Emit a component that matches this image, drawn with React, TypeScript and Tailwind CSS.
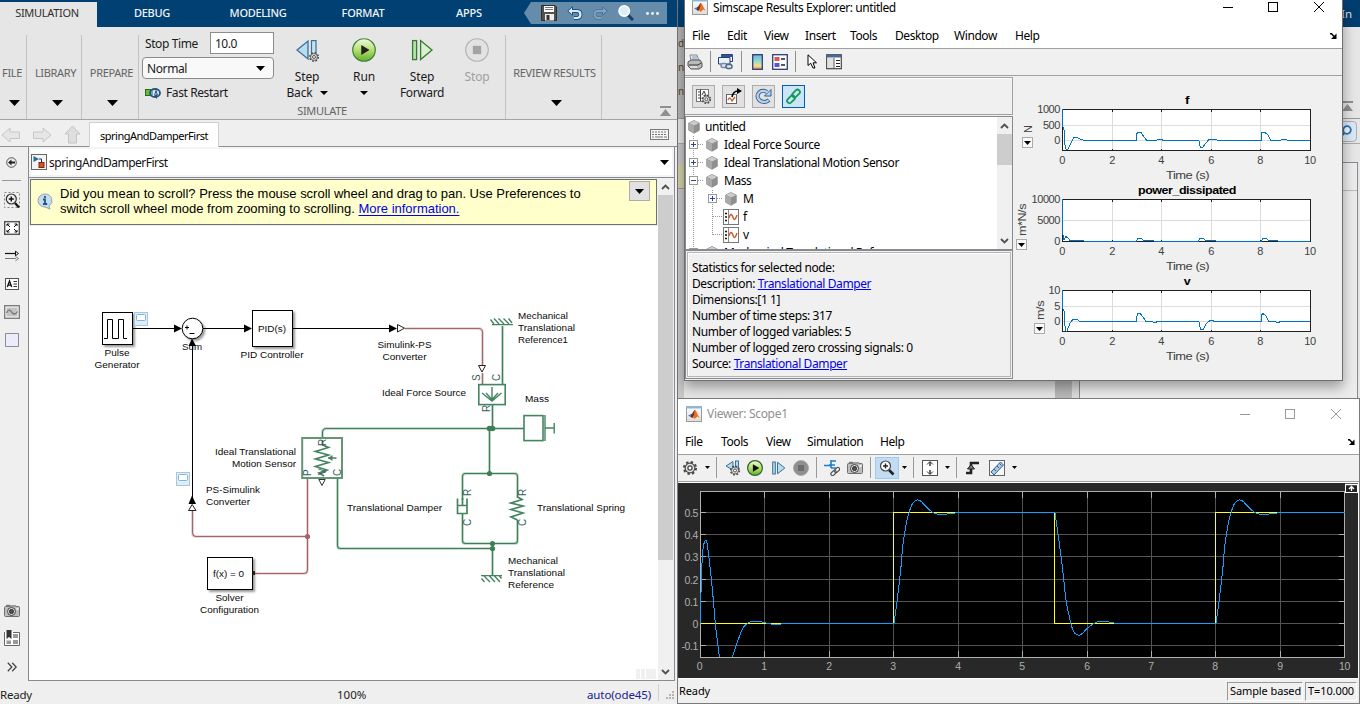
import React from "react";

type Kids = { children?: React.ReactNode };

function Icon({ w = 16, h = 16, vb, children }: Kids & { w?: number; h?: number; vb?: string }) {
  return (
    <svg width={w} height={h} viewBox={vb ?? `0 0 ${w} ${h}`} className="block shrink-0">
      {children}
    </svg>
  );
}

function Caret({ w = 11, h = 6, color = "#000" }: { w?: number; h?: number; color?: string }) {
  return (
    <Icon w={w} h={h}>
      <path d={`M0 0H${w}L${w / 2} ${h}Z`} fill={color} />
    </Icon>
  );
}

function Gear({ x, y, s = 1 }: { x: number; y: number; s?: number }) {
  return (
    <g transform={`translate(${x} ${y}) scale(${s})`}>
      <circle r="5.2" fill="none" stroke="#4a4a4a" strokeWidth="2.4" strokeDasharray="2.1 1.98" />
      <circle r="4.4" fill="#e2e2e2" stroke="#4a4a4a" strokeWidth="1" />
      <circle r="1.9" fill="#fff" stroke="#4a4a4a" strokeWidth="1.2" />
    </g>
  );
}

function MatlabIcon() {
  return (
    <Icon>
      <defs>
        <linearGradient id="mlBox" x1="0" y1="0" x2="0" y2="1">
          <stop offset="0" stopColor="#fff" />
          <stop offset="1" stopColor="#dcdcdc" />
        </linearGradient>
      </defs>
      <rect x="0.5" y="0.5" width="15" height="15" fill="url(#mlBox)" stroke="#9a9a9a" />
      <rect x="0" y="0" width="16" height="2.5" fill="#8fb6d4" />
      <path d="M2 9.6L5.4 8L6.8 9.4L4.6 11Z" fill="#3f8fc4" />
      <path d="M5.4 8C7 7.6 7.6 4 9 4L8.6 9.5L6.3 12L4.6 11Z" fill="#7b2c20" />
      <path d="M9 4C10.2 4.2 11.5 9 13.8 12L11.4 10.6L8.6 13L6.9 11.2C8.2 9 8.2 6.4 9 4Z" fill="#e8701e" />
    </Icon>
  );
}

function Camera() {
  return (
    <Icon w={16} h={13}>
      <rect x="0.5" y="2.5" width="15" height="10" rx="1" fill="#bdbdbd" stroke="#6f6f6f" />
      <rect x="2" y="0.8" width="4" height="2" fill="#777" />
      <rect x="6" y="1" width="6" height="2" fill="#999" />
      <circle cx="7.5" cy="7.5" r="4" fill="#ddd" stroke="#444" />
      <circle cx="7.5" cy="7.5" r="2" fill="#555" stroke="#222" />
      <rect x="12.5" y="4" width="2" height="2" fill="#f5f5f5" />
    </Icon>
  );
}

/* ------------------------------------------------------------------ */
/* Simulink editor window                                              */
/* ------------------------------------------------------------------ */

function TabStrip() {
  return (
    <div className="flex h-[27px] bg-[#004073] text-[11px] text-[#f0f4f8]">
      <div className="mt-[2px] flex w-[97px] items-center justify-center bg-[#e6e6e6] pb-[3px] pr-[3px] tracking-[-0.3px] text-[#2f2f2f]">SIMULATION</div>
      <div className="flex w-[110px] items-center justify-center font-medium tracking-[-0.3px]">DEBUG</div>
      <div className="flex w-[102px] items-center justify-center font-medium tracking-[-0.3px]">MODELING</div>
      <div className="flex w-[108px] items-center justify-center font-medium tracking-[-0.2px]">FORMAT</div>
      <div className="flex w-[104px] items-center justify-center font-medium tracking-[-0.2px]">APPS</div>
      <div className="ml-[3px] mt-[2px] flex h-[22px] w-[143px]">
        <Icon w={8} h={22}>
          <path d="M8 0H7L0 11L7 22H8Z" fill="#668cab" />
        </Icon>
        <div className="flex flex-1 items-center bg-[#668cab] pl-[9px]">
          <Icon>
            <path d="M0.5 0.5H14L15.5 2V15.5H0.5Z" fill="#56504b" stroke="#302d2b" />
            <rect x="3" y="1" width="10" height="6" fill="#fff" />
            <path d="M4 2.5H12M4 4.5H12" stroke="#777" />
            <rect x="4" y="9" width="9" height="6.5" fill="#eee" />
            <rect x="5.5" y="10" width="3" height="5" fill="#333" />
          </Icon>
          <div className="w-[10px]" />
          <Icon>
            <path d="M4 6H10.5C14.5 6.4 14.2 12.4 10.5 13H7" fill="none" stroke="#1d4f86" strokeWidth="4" />
            <path d="M0.7 6L5.5 1.8V10.2Z" fill="#dcebf8" stroke="#1d4f86" />
            <path d="M4 6H10.5C14.5 6.4 14.2 12.4 10.5 13H7" fill="none" stroke="#dcebf8" strokeWidth="2.2" />
          </Icon>
          <div className="w-[9px]" />
          <Icon>
            <path d="M12 6H5.5C1.5 6.4 1.8 12.4 5.5 13H9" fill="none" stroke="#44739c" strokeWidth="3.4" />
            <path d="M15.3 6L10.5 1.8V10.2Z" fill="#80a2bd" stroke="#44739c" />
            <path d="M12 6H5.5C1.5 6.4 1.8 12.4 5.5 13H9" fill="none" stroke="#80a2bd" strokeWidth="2" />
          </Icon>
          <div className="w-[10px]" />
          <Icon>
            <path d="M10 10L15 15" stroke="#153f68" strokeWidth="3" />
            <circle cx="6.2" cy="6" r="5.2" fill="#dcecf8" stroke="#fff" strokeWidth="1.6" />
          </Icon>
          <div className="w-[12px]" />
          <Icon w={13} h={3}>
            <circle cx="1.5" cy="1.5" r="1.4" fill="#fff" />
            <circle cx="6.5" cy="1.5" r="1.4" fill="#fff" />
            <circle cx="11.5" cy="1.5" r="1.4" fill="#fff" />
          </Icon>
        </div>
      </div>
    </div>
  );
}

function Section({ name, cls, pad }: { name: string; cls: string; pad: string }) {
  return (
    <div className={`mt-2 flex flex-col items-center border-r border-[#c2c2c2] pt-[30px] text-[11px] leading-4 tracking-[-0.35px] text-[#646464] ${cls}`}>
      <span className="whitespace-nowrap">{name}</span>
      <div className={`mt-[19px] ${pad}`}>
        <Caret />
      </div>
    </div>
  );
}

function Ribbon() {
  return (
    <div className="flex h-[93px] border-b border-[#a3a3a3] bg-[#e6e6e6] text-[12px] tracking-[-0.15px] text-[#1a1a1a]">
      <Section name="FILE" cls="w-[27px] pr-[2px]" pad="pl-[4px]" />
      <Section name="LIBRARY" cls="w-[55px] pl-[3px]" pad="pl-[3px]" />
      <Section name="PREPARE" cls="w-[57px] pl-[3px]" pad="pl-[2px]" />
      <div className="mt-2 flex w-[367px] flex-col border-r border-[#c2c2c2]">
        <div className="flex h-[69px]">
          <div className="ml-[3px] mt-[-3px] w-[132px] shrink-0">
            <div className="flex h-[22px] items-center">
              <span className="w-[68px] pl-[3px] pt-[2px] tracking-[-0.4px]">Stop Time</span>
              <div className="flex h-[22px] w-[64px] items-center border border-[#8c8c8c] bg-white pl-1 pt-px tracking-[-0.5px]">10.0</div>
            </div>
            <div className="mt-[3px] flex h-[22px] items-center justify-between rounded border border-[#8c8c8c] bg-[#f9f9f9] pl-1 pr-2">
              <span className="pt-px tracking-[-0.4px]">Normal</span>
              <Caret w={9} h={5} />
            </div>
            <div className="mt-[5px] flex h-[18px] items-center pl-[3px] tracking-[-0.4px]">
              <Icon w={16} h={12}>
                <rect x="0.5" y="2.5" width="5" height="6" fill="#65bc35" stroke="#2b6b1b" />
                <ellipse cx="10" cy="6" rx="5" ry="4" fill="#dbe8f2" stroke="#24557f" strokeWidth="1.8" />
                <path d="M7 3.5V8.5M9.5 8.5L11 3.5L12.5 8.5" stroke="#24557f" fill="none" />
                <path d="M9 9L12 12V7Z" fill="#24557f" />
              </Icon>
              <span className="ml-[5px]">Fast Restart</span>
            </div>
          </div>
          <div className="ml-[8px] flex w-[50px] flex-col items-center pt-[3px] text-center leading-4">
            <Icon w={24} h={24}>
              <path d="M2 12L13 3V21Z" fill="#b9dcf0" stroke="#3a6f98" strokeWidth="1.3" />
              <rect x="16.5" y="2.6" width="4.5" height="15" fill="#c6e3f4" stroke="#3a6f98" strokeWidth="1.2" />
              <Gear x={19} y={19} s={0.78} />
            </Icon>
            <span className="mt-[7px]">Step</span>
            <span className="flex items-center gap-[7px]">Back <Caret w={8} h={4} /></span>
          </div>
          <div className="ml-[7px] flex w-[50px] flex-col items-center pt-[3px] leading-4">
            <Icon w={24} h={24} vb="0 0 26 26">
              <defs>
                <linearGradient id="runFill" x1="0" y1="0" x2="0" y2="1">
                  <stop offset="0" stopColor="#f2fbe2" />
                  <stop offset="0.5" stopColor="#b5e070" />
                  <stop offset="1" stopColor="#63ac2e" />
                </linearGradient>
              </defs>
              <circle cx="13" cy="13" r="12.2" fill="url(#runFill)" stroke="#3d8232" strokeWidth="1.3" />
              <path d="M10 7.5L19 13L10 18.5Z" fill="#222" />
            </Icon>
            <span className="mt-[7px]">Run</span>
            <div className="mt-[6px]"><Caret w={8} h={4} /></div>
          </div>
          <div className="ml-[5px] flex w-[56px] flex-col items-center pt-[3px] leading-4">
            <Icon w={24} h={24}>
              <rect x="2.6" y="2.6" width="4" height="19" fill="#b8e3a4" stroke="#357b36" strokeWidth="1.3" />
              <path d="M10.6 2.6V21.5L22 12Z" fill="#d9f2cd" stroke="#357b36" strokeWidth="1.3" />
            </Icon>
            <span className="mt-[7px]">Step</span>
            <span className="tracking-[-0.4px]">Forward</span>
          </div>
          <div className="ml-[6px] flex w-[42px] flex-col items-center pt-[3px] leading-4 text-[#a0a0a0]">
            <Icon w={24} h={24} vb="0 0 26 26">
              <circle cx="13" cy="13" r="12.2" fill="#e2e2e2" stroke="#b5b5b5" strokeWidth="1.3" />
              <rect x="8.5" y="8.5" width="9" height="9" fill="#a3a3a3" />
            </Icon>
            <span className="mt-[7px]">Stop</span>
          </div>
        </div>
        <div className="pt-px text-center text-[11px] leading-4 tracking-[-0.3px] text-[#646464]">SIMULATE</div>
      </div>
      <Section name="REVIEW RESULTS" cls="w-[96px] pl-[2px]" pad="pl-[4px]" />
      <div className="ml-[58px] mt-[79px]">
        <Icon w={11} h={10}>
          <path d="M0 0H11V2H0ZM5.5 3L11 10H0Z" fill="#8f8f8f" />
        </Icon>
      </div>
    </div>
  );
}

function DocBar() {
  return (
    <div className="flex h-[27px] items-end border-b border-[#909090] bg-[#efefef]">
      <div className="flex h-[26px] w-[89px] items-center gap-[12px] pl-[1px] pt-[3px]">
        <Icon w={20} h={18}>
          <path d="M1 9L9 2V6H18.5V12.5H9V16Z" fill="#e6e6e6" stroke="#c6c6c6" />
        </Icon>
        <Icon w={19} h={18}>
          <path d="M18 9L10 2V6H0.5V12.5H10V16Z" fill="#e6e6e6" stroke="#c6c6c6" />
        </Icon>
        <Icon w={17} h={19}>
          <path d="M8.5 1L16 9H12.5V18H4.5V9H1Z" fill="#dedede" stroke="#c4c4c4" />
        </Icon>
      </div>
      <div className="mb-[-1px] flex h-[25px] w-[130px] items-center justify-center border border-b-0 border-[#cfcfcf] bg-white pt-[3px] text-[11px] tracking-[-0.5px] text-black">springAndDamperFirst</div>
      <div className="mb-[6px] ml-[431px]">
        <Icon w={19} h={11}>
          <rect x="0.5" y="0.5" width="18" height="10" fill="#f4f4f4" stroke="#777" />
          <path d="M2 3H17M2 5.5H17" stroke="#777" strokeDasharray="2 1" />
          <path d="M2 8H4M5 8H13M14 8H17" stroke="#777" />
        </Icon>
      </div>
    </div>
  );
}

function Palette() {
  return (
    <div className="flex w-[28px] shrink-0 flex-col items-center bg-[#efefef] pr-[5px] pt-[10px]">
      <Icon w={11} h={11}>
        <circle cx="5.5" cy="5.5" r="4.8" fill="#eee" stroke="#555" />
        <path d="M2 5.5L5.5 2.6V4.5H9V6.5H5.5V8.4Z" fill="#222" />
      </Icon>
      <div className="mt-[12px] h-px w-[19px] bg-[#999]" />
      <div className="mt-[11px]">
        <Icon>
          <rect x="0.5" y="0.5" width="15" height="15" fill="none" stroke="#888" strokeDasharray="2 2" />
          <path d="M11 11L15 15.5" stroke="#111" strokeWidth="2.2" />
          <circle cx="7.3" cy="7" r="5" fill="#eee" stroke="#333" strokeWidth="1.2" />
          <path d="M4.8 7H9.8M7.3 4.5V9.5" stroke="#111" strokeWidth="1.4" />
        </Icon>
      </div>
      <div className="mt-[13px]">
        <Icon w={16} h={14}>
          <rect x="0.7" y="0.7" width="14.6" height="12.6" fill="#fff" stroke="#555" strokeWidth="1.4" />
          <path d="M3 5V3H5.5M3 3L6 6M13 5V3H10.5M13 3L10 6M3 9V11H5.5M3 11L6 8M13 9V11H10.5M13 11L10 8" stroke="#111" fill="none" />
        </Icon>
      </div>
      <div className="mt-[15px]">
        <Icon w={14} h={12}>
          <path d="M0 3.5H11" stroke="#111" strokeWidth="1.2" />
          <path d="M10.5 1.2L13.5 3.5L10.5 5.8Z" fill="#fff" stroke="#111" />
          <path d="M0 8.5H11M10.5 6.5L13.5 8.5L10.5 10.8" stroke="#777" fill="none" />
        </Icon>
      </div>
      <div className="mt-[16px]">
        <Icon w={14} h={12}>
          <rect x="0.5" y="0.5" width="13" height="11" fill="#fff" stroke="#555" />
          <path d="M2.3 9L4.5 3L6.7 9M3 7.2H6" stroke="#111" strokeWidth="1.3" fill="none" />
          <path d="M8.5 3.5H12M8.5 6H12M8.5 8.5H12" stroke="#333" />
        </Icon>
      </div>
      <div className="mt-[15px]">
        <Icon w={16} h={14}>
          <rect x="0.7" y="0.7" width="14.6" height="12.6" fill="#f8f8f8" stroke="#777" strokeWidth="1.3" />
          <rect x="2.5" y="2.5" width="11" height="9" fill="#c3c3c3" />
          <path d="M2.5 8C5 2.5 7 6.5 8.5 8C10 9.8 12 9 13.5 6.5" stroke="#777" strokeWidth="1.3" fill="none" />
        </Icon>
      </div>
      <div className="mt-[14px] h-[14px] w-[14px] border border-[#8d8da0] bg-[#ebebfa]" />
      <div className="mt-auto"><Camera /></div>
      <div className="mt-[13px]">
        <Icon w={16} h={16}>
          <path d="M0.5 2V15.5H15.5V2.5H9" fill="#fff" stroke="#666" />
          <path d="M2.5 0H7.5V9L5 7L2.5 9Z" fill="#333" />
          <path d="M9 4H14V8H9ZM9 10H14V14H9ZM2.5 10.5H7V14H2.5Z" fill="#999" />
        </Icon>
      </div>
      <div className="mb-[9px] mt-[16px]">
        <Icon w={10} h={10}>
          <path d="M0.8 0.8L4.8 5L0.8 9.2M5.2 0.8L9.2 5L5.2 9.2" stroke="#444" strokeWidth="1.3" fill="none" />
        </Icon>
      </div>
    </div>
  );
}

function Wire({ d, c = "g" }: { d: string; c?: "g" | "r" }) {
  return (
    <g fill="none">
      <path d={d} stroke={c === "g" ? "#c6dccd" : "#ecd9d9"} strokeWidth="3" />
      <path d={d} stroke={c === "g" ? "#3f7f57" : "#a0666b"} strokeWidth="1.1" />
    </g>
  );
}

function L({ x, y, w, a = "start", children }: { x: number; y: number; w: number; a?: "start" | "middle" | "end"; children: string }) {
  return (
    <text x={x} y={y} textAnchor={a} textLength={w} lengthAdjust="spacingAndGlyphs">
      {children}
    </text>
  );
}

function Badge({ x, y }: { x: number; y: number }) {
  return (
    <g>
      <rect x={x + 0.5} y={y + 0.5} width="13" height="13" fill="#e0ecf6" stroke="#a8c6dc" />
      <rect x={x + 2.5} y={y + 2.5} width="9" height="6" rx="1" fill="#fff" stroke="#7fb6e0" />
    </g>
  );
}

const green = "#458460";

function Diagram() {
  return (
    <svg width="629" height="454" viewBox="29 226 629 454" className="block bg-white" fontFamily="'Liberation Sans', Arial, sans-serif" fontSize="9.6">
      <defs>
        <filter id="blockShadow" x="-20%" y="-20%" width="150%" height="150%">
          <feDropShadow dx="2" dy="2" stdDeviation="1.2" floodColor="#000" floodOpacity="0.4" />
        </filter>
      </defs>

      <g stroke="#000" fill="none">
        <path d="M133 328.5H176M203 328.5H246M293 328.5H390M192.5 346V498" />
      </g>

      <Wire c="r" d="M405 328.5H478.5Q482.5 328.5 482.5 332.5V366M482.5 373V384" />
      <Wire c="r" d="M307.5 478V569.5Q307.5 573.5 303.5 573.5H254" />
      <Wire c="r" d="M307.5 536.5H196.5Q192.5 536.5 192.5 532.5V511" />
      <Wire d="M502.5 326V384M492.5 405V428.5M524 428.5H326.5Q322.5 428.5 322.5 432.5V439M489.5 428.5V473.5" />
      <Wire d="M462.5 500V476.5Q462.5 473.5 465.5 473.5H514.5Q517.5 473.5 517.5 476.5V498M462.5 514V540.5Q462.5 543.5 465.5 543.5H514.5Q517.5 543.5 517.5 540.5V520" />
      <Wire d="M337.5 478V545.5Q337.5 548.5 340.5 548.5H492.5M492.5 543.5V575" />
      <circle cx="307.5" cy="536.5" r="2.6" fill="#a0666b" />
      <g fill="#3f7f57">
        <circle cx="489.5" cy="428.5" r="2.8" />
        <circle cx="492.5" cy="428.5" r="2.8" />
        <circle cx="489.5" cy="473.5" r="2.6" />
        <circle cx="492.5" cy="543.5" r="2.6" />
        <circle cx="492.5" cy="548.5" r="2.6" />
      </g>

      <g fill="#fff" stroke="#000" filter="url(#blockShadow)">
        <rect x="102.5" y="312.5" width="30" height="32" />
        <rect x="252.5" y="310.5" width="40" height="36" />
        <rect x="207.5" y="557.5" width="45" height="32" />
        <circle cx="192.5" cy="328.5" r="10.3" />
      </g>
      <path d="M104 338.5H107.5V319.5H112.5V338.5H118.5V319.5H123.5V338.5H127" fill="none" stroke="#000" />
      <path d="M185 327.5H189M187 325.5V329.5M189.5 333.5H194.5" stroke="#000" fill="none" />
      <rect x="252.5" y="571" width="2.5" height="4" fill="#222" />
      <Badge x={134} y={312} />
      <Badge x={176} y={472} />

      <g fill="#000">
        <path d="M174 324.5L182 328.5L174 332.5Z" />
        <path d="M244 324.5L252 328.5L244 332.5Z" />
        <path d="M389 324.5L397 328.5L389 332.5Z" />
        <path d="M188.5 504L192 495.5L196 504Z" />
      </g>
      <g fill="#fff" stroke="#222">
        <path d="M397.5 324.5L404.5 328.2L397.5 332Z" />
        <path d="M478.5 365.5H485.5L482 372Z" />
        <path d="M188.5 510.5H196L192.2 504.5Z" />
      </g>

      <g fill="#fff" stroke={green} strokeWidth="1.6">
        <rect x="478.8" y="384.6" width="26.4" height="20" />
        <rect x="524" y="415.6" width="19" height="25" />
        <rect x="302.2" y="438" width="39.8" height="40" stroke="#659674" strokeWidth="2" />
      </g>
      <g fill="none" stroke={green} strokeWidth="1.4">
        <path d="M492 387V399M482 393L492 401L501.5 393M486 393L492 399.5L498 393" />
        <path d="M545 415V441M545 428H554M554.2 423V433.5" />
        <path d="M492 324.6H513M494 324L490.5 319.5M499 324L494 318.5M504 324L498.5 318.5M509 324L503.5 318.5M512 323L508.5 318.5" />
        <path d="M481 575.6H502M484 576L490 582M489 575.5L495 582M494 575.5L500 582M499 575.5L501.5 578.5M484.5 582L481.5 578.5" />
      </g>
      <g fill="none" stroke={green} strokeWidth="1.7">
        <path d="M322.5 440V445L328.5 447.5L315.5 451.5L328.5 455L315.5 459L328.5 462.5L315.5 466.5L327 470L319 473L324 476M328 458H336.5" />
        <path d="M457.5 498.5V513.5H467V498.5M457.5 505.5H467M462.5 498V505" />
        <path d="M517.5 497L522 499.5L511 503L523 506L511 509.5L523 513L511 517L517.5 520" />
      </g>
      <path d="M328 458L332.5 455V461Z" fill={green} />
      <path d="M318.8 479.5H325.2L322 485.5Z" fill="#fff" stroke="#333" />

      <g fill="#365b55" fontSize="10">
        {[
          ["S", 480, 381], ["C", 500, 381], ["R", 490, 412], ["R", 326, 446], ["P", 311, 476],
          ["V", 326, 475], ["C", 341, 476], ["R", 471, 496], ["C", 471, 526], ["R", 526, 496], ["C", 526, 526],
        ].map(([t, x, y], i) => (
          <text key={i} transform={`translate(${x} ${y}) rotate(-90)`}>{t}</text>
        ))}
      </g>

      <g fill="#0a0a0a">
        <L x={117} y={356} w={25} a="middle">Pulse</L>
        <L x={117} y={368} w={45} a="middle">Generator</L>
        <L x={192} y={350} w={20} a="middle">Sum</L>
        <L x={272} y={358} w={63} a="middle">PID Controller</L>
        <L x={272} y={332} w={28} a="middle">PID(s)</L>
        <L x={404.5} y={348} w={54} a="middle">Simulink-PS</L>
        <L x={404.5} y={360} w={44} a="middle">Converter</L>
        <L x={518} y={319} w={50}>Mechanical</L>
        <L x={518} y={331} w={57}>Translational</L>
        <L x={518} y={343} w={50}>Reference1</L>
        <L x={382} y={396} w={84}>Ideal Force Source</L>
        <L x={525} y={402} w={24}>Mass</L>
        <L x={296} y={455} w={81} a="end">Ideal Translational</L>
        <L x={296} y={467} w={64} a="end">Motion Sensor</L>
        <L x={206} y={493} w={54}>PS-Simulink</L>
        <L x={206} y={505} w={44}>Converter</L>
        <L x={347} y={511} w={95}>Translational Damper</L>
        <L x={537} y={511} w={88}>Translational Spring</L>
        <L x={508} y={564} w={50}>Mechanical</L>
        <L x={508} y={576} w={57}>Translational</L>
        <L x={508} y={588} w={46}>Reference</L>
        <L x={213} y={577} w={31}>f(x) = 0</L>
        <L x={229.5} y={601} w={28} a="middle">Solver</L>
        <L x={229.5} y={613} w={59} a="middle">Configuration</L>
      </g>
      <path d="M188.5 346L192 338.5L196 346Z" fill="#000" />
      <path d="M192.5 344V353" stroke="#000" />
      <path d="M636 669H640V679H636ZM641 669H645V679H641ZM646 669H656V679H646Z" fill="#f0f0f0" />
    </svg>
  );
}

function Chevron({ up }: { up?: boolean }) {
  return (
    <Icon w={9} h={6}>
      <path d={up ? "M1 5L4.5 1.5L8 5" : "M1 1L4.5 4.5L8 1"} stroke="#505050" strokeWidth="1.8" fill="none" />
    </Icon>
  );
}

function ScrollBar({ thumb }: { thumb: string }) {
  return (
    <div className="flex w-[15px] shrink-0 flex-col items-center bg-[#f0f0f0]">
      <div className="flex h-[17px] shrink-0 items-center"><Chevron up /></div>
      <div className={`w-full shrink-0 bg-[#cdcdcd] ${thumb}`} />
      <div className="mt-auto flex h-[17px] shrink-0 items-center"><Chevron /></div>
    </div>
  );
}

function EditorWindow() {
  return (
    <div className="absolute left-0 top-0 flex h-[704px] w-[677px] flex-col overflow-hidden bg-[#efefef]">
      <TabStrip />
      <Ribbon />
      <DocBar />
      <div className="flex h-[534px]">
        <Palette />
        <div className="w-[647px] border border-t-0 border-[#868b93]">
          <div className="flex h-[31px] items-center justify-between border-b border-[#868b93] bg-white pl-[2px] pr-[5px] shadow-[inset_0_0_0_2px_#f4f4f4]">
            <div className="flex items-center">
              <Icon>
                <rect x="0.5" y="0.5" width="15" height="15" fill="#f4f4f4" stroke="#666" />
                <path d="M2.5 2L8 5L2.5 8Z" fill="#1f6fa5" />
                <path d="M8 5H10.5V8" stroke="#333" fill="none" />
                <rect x="8" y="8.5" width="5" height="5" fill="#d9501e" stroke="#7a2a10" />
              </Icon>
              <span className="ml-[2px] pt-[2px] text-[12px] tracking-[-0.5px] text-[#111]">springAndDamperFirst</span>
            </div>
            <Caret w={9} h={5} />
          </div>
          <div className="flex h-[502px]">
            <div className="w-[629px]">
              <div className="h-[48px] pl-[1px] pt-[1px]">
                <div className="flex h-[46px] w-[627px] border border-[#6f6f6f] bg-[#ffffcc] pl-[6px] font-['Liberation_Sans',Arial,sans-serif] text-[13px] leading-[15px] tracking-[-0.012px] text-black">
                  <div className="mt-[13px]">
                    <Icon w={16} h={17}>
                      <path d="M8 1A7 6.6 0 0 1 12 13L13 16L8 14A7 6.5 0 0 1 8 1Z" fill="#c7dbea" stroke="#8ba5b9" />
                      <path d="M8 3V5M6 6.5H8V11M6 11H10.2" stroke="#1b568c" strokeWidth="1.8" fill="none" />
                    </Icon>
                  </div>
                  <div className="ml-[7px] w-[569px] whitespace-nowrap pt-[6px]">
                    <div>Did you mean to scroll? Press the mouse scroll wheel and drag to pan. Use Preferences to</div>
                    <div>switch scroll wheel mode from zooming to scrolling. <span className="text-[#0000ee] underline underline-offset-2">More information.</span></div>
                  </div>
                  <div className="mt-[1px] flex h-[20px] w-[21px] items-center justify-center border border-[#adadad] bg-[#e1e1e1]">
                    <Caret w={9} h={5} />
                  </div>
                </div>
              </div>
              <Diagram />
            </div>
            <ScrollBar thumb="h-[365px]" />
          </div>
        </div>
      </div>
      <div className="flex h-[23px] items-center text-[11.5px] text-[#222]">
        <span className="w-[337px] pt-[5px] tracking-[-0.2px]">Ready</span>
        <span className="w-[250px] pt-[5px]">100%</span>
        <span className="w-[71px] pt-[5px] tracking-[-0.1px] text-[#20208c]">auto(ode45)</span>
        <div className="h-[17px] w-px bg-[#d2d2d2]" />
        <div className="ml-[7px] mt-[6px]">
          <Icon w={9} h={9}>
            <path d="M6 0H8V2H6ZM3 3H5V5H3ZM6 3H8V5H6ZM0 6H2V8H0ZM3 6H5V8H3ZM6 6H8V8H6Z" fill="#b4b4b4" />
          </Icon>
        </div>
      </div>
    </div>
  );
}

/* ------------------------------------------------------------------ */
/* Window behind the two tool windows                                  */
/* ------------------------------------------------------------------ */

function BackWindow() {
  return (
    <div className="absolute left-[677px] top-0 flex h-[398px] w-[683px] flex-col border-l border-[#777] bg-[#e6e6e6] text-[11.5px]">
      <div className="flex h-[27px] items-center justify-end bg-[#003e70] pr-[8px] pt-px text-[#e0e0e0]">In</div>
      <div className="flex h-[92px] justify-between border-b border-[#999]">
        <div className="w-[6px] bg-[#b5b5b5] pt-[4px] text-[10px] leading-[24px] tracking-[-0.5px] text-[#54412b]">
          <div>d</div>
          <div>n</div>
          <div>n</div>
        </div>
        <div className="mt-[74px] pr-[7px]">
          <Icon w={11} h={10}>
            <path d="M0 0H11V2H0ZM5.5 3L11 10H0Z" fill="#8f8f8f" />
          </Icon>
        </div>
      </div>
      <div className="flex h-[25px] items-center justify-end border-b border-[#aaa] pr-[3px]">
        <div className="flex h-[21px] w-[22px] items-center justify-center rounded border border-[#a7b0bd] bg-[#dde6f2]">
          <Icon w={12} h={12}>
            <path d="M4.5 8L1 11.5" stroke="#555" strokeWidth="1.8" />
            <circle cx="7" cy="5" r="3.8" fill="#eef6fd" stroke="#1e73b8" strokeWidth="1.8" />
          </Icon>
        </div>
      </div>
      <div className="flex flex-1">
        <div className="w-[6px] bg-[#c8c8c8] pt-[20px]">
          <div className="h-[25px] border-b border-[#999] bg-[#d1d1a7]" />
        </div>
        <div className="ml-[371px] w-[16px] bg-[#b8b8b8]" />
        <div className="w-[8px] border-l border-[#bbb] bg-[#dcdcdc]" />
        <div className="mt-[18px] w-[279px] border border-b-0 border-[#868b93] bg-[#ececec]">
          <div className="h-[28px] border-b border-[#bbb]" />
        </div>
      </div>
    </div>
  );
}

/* ------------------------------------------------------------------ */
/* Results explorer                                                    */
/* ------------------------------------------------------------------ */

function WindowButtons({ color }: { color: string }) {
  return (
    <svg width="102" height="12" viewBox="0 0 102 12" className="block" shapeRendering="crispEdges">
      <path d="M0 6.5H10" stroke={color} />
      <rect x="45.5" y="1.5" width="9" height="9" fill="none" stroke={color} />
      <path d="M91 1L101 11M101 1L91 11" stroke={color} shapeRendering="auto" />
    </svg>
  );
}

function DockArrow() {
  return (
    <Icon w={8} h={6}>
      <path d="M1 0.8H2.5L6 4.5" stroke="#000" strokeWidth="1.4" fill="none" />
      <path d="M7.5 0.5V6H2Z" fill="#000" />
    </Icon>
  );
}

function Cube() {
  return (
    <Icon w={12} h={14}>
      <path d="M6 0.5L11.3 3V10.3L6 13.3L0.7 10.3V3Z" fill="#8f8f8f" stroke="#777" strokeWidth="0.6" />
      <path d="M6 0.7L11.2 3L6 5.6L0.8 3Z" fill="#ccc" />
      <path d="M0.8 3.2L6 5.8V13.2L0.8 10.2Z" fill="#a9a9a9" />
    </Icon>
  );
}

function SignalIcon() {
  return (
    <Icon>
      <rect x="0.5" y="0.5" width="15" height="15" fill="#fff" stroke="#777" />
      <path d="M5.5 1V15" stroke="#888" />
      <path d="M2 4.5H4M2 8H4M2 11.5H4" stroke="#111" strokeWidth="1.3" />
      <path d="M6 9C7.5 3.5 9 5 10.5 9.5C11.5 12 13 9 14 6" stroke="#c85c28" strokeWidth="1.4" fill="none" />
    </Icon>
  );
}

function TreeRow({ level, box, icon, last, text }: { level: number; box?: "+" | "-"; icon: "cube" | "sig"; last?: boolean; text: string }) {
  const bx = level === 1 ? 7.5 : 26.5;
  const w = icon === "sig" ? 37 : level === 1 ? 20 : 39;
  return (
    <div className="flex h-[18px] shrink-0 items-center">
      <svg width={w} height="18" className="block shrink-0" shapeRendering="crispEdges">
        <path d="M7.5 0V18" stroke="#999" strokeDasharray="1 1" />
        {level === 2 && <path d={last ? "M26.5 0V9" : "M26.5 0V18"} stroke="#999" strokeDasharray="1 1" />}
        <path d={`M${bx} 8.5H${bx + 10}`} stroke="#999" strokeDasharray="1 1" />
        {box && <rect x={bx - 4} y="4.5" width="8" height="8" fill="#fff" stroke="#999" />}
        {box && <path d={box === "+" ? `M${bx - 2.5} 8.5H${bx + 2.5}M${bx} 6V11` : `M${bx - 2.5} 8.5H${bx + 2.5}`} stroke="#26489a" />}
      </svg>
      {icon === "cube" ? <Cube /> : <SignalIcon />}
      <span className={`whitespace-nowrap leading-4 ${icon === "cube" ? "ml-[6px]" : "ml-[4px]"}`}>{text}</span>
    </div>
  );
}

type ChartProps = { top: number; h: number; ticks: { y: number; t: string }[]; title: string; unit: string; unitX: number; unitY: number; unitW: number; dropX: number; dropY: number; d: string };

function MiniChart({ top, h, ticks, title, unit, unitX, unitY, unitW, dropX, dropY, d }: ChartProps) {
  const xs = [0, 2, 4, 6, 8, 10];
  const X = (v: number) => Math.round(1062 + v * 24.8) + 0.5;
  const T = top + 0.5;
  const B = top + h + 0.5;
  const titleW: Record<string, number> = { power_dissipated: 98, f: 4, v: 6.5 };
  return (
    <g>
      <rect x="1062.5" y={T} width="248" height={h} fill="#fff" shapeRendering="crispEdges" />
      <g shapeRendering="crispEdges" fill="none">
        {xs.slice(1, 5).map((v) => (
          <path key={v} d={`M${X(v)} ${T}V${B}`} stroke="#dcdcdc" />
        ))}
        {ticks.map((k) => (
          <path key={k.t} d={`M1062 ${k.y + 0.5}H1310`} stroke="#dcdcdc" />
        ))}
        <rect x="1062.5" y={T} width="248" height={h} stroke="#202020" />
        {xs.slice(1, 5).map((v) => (
          <path key={v} d={`M${X(v)} ${T}V${T + 2}M${X(v)} ${B - 2}V${B}`} stroke="#202020" />
        ))}
        <path d={d} stroke="#0072bd" />
      </g>
      <g fill="#404040" fontSize="11">
        {ticks.map((k) => (
          <text key={k.t} x="1060" y={k.y + 4} textAnchor="end">{k.t}</text>
        ))}
        {xs.map((v) => (
          <text key={v} x={X(v) - 0.5} y={B + 13} textAnchor="middle">{v}</text>
        ))}
        <text x="1187.5" y={B + 28} textAnchor="middle" textLength="43" lengthAdjust="spacingAndGlyphs">Time (s)</text>
        <text transform={`translate(${unitX} ${unitY}) rotate(-90)`} textLength={unitW} lengthAdjust="spacingAndGlyphs">{unit}</text>
      </g>
      <text x="1187" y={T - 5.5} textAnchor="middle" fontWeight="bold" fontSize="11.5" fill="#000" textLength={titleW[title]} lengthAdjust="spacingAndGlyphs">{title}</text>
      <rect x={dropX + 0.5} y={dropY + 0.5} width="10" height="10" fill="#fafafa" stroke="#aaa" />
      <path d={`M${dropX + 2} ${dropY + 4}h7l-3.5 4z`} fill="#000" />
    </g>
  );
}

function SideCharts() {
  return (
    <svg width="329" height="304" viewBox="1013 76 329 304" className="block shrink-0" fontFamily="'Liberation Sans', Arial, sans-serif">
      <MiniChart top={109} h={41} title="f" unit="N" unitX={1032} unitY={133} unitW={7.5} dropX={1022} dropY={137}
        ticks={[{ y: 109, t: "1000" }, { y: 125, t: "500" }, { y: 140, t: "0" }]}
        d="M1062.5 109V126L1064 130V140L1066 149H1068L1071 143L1074 137.5H1077L1080 139L1084 140.5H1136.5V134L1138 132.5H1141L1144 137L1147 140.5H1156L1158 139.5H1162L1163 140.5H1199L1199.5 145L1201 148L1203 147L1206 143L1209 139.5H1216L1218 140.5H1261.5V133L1263 132.5H1265L1268 135L1271 140.5H1280L1282 139.5H1286L1288 140.5H1310" />
      <MiniChart top={199} h={42} title="power_dissipated" unit="m*N/s" unitX={1026} unitY={236} unitW={32} dropX={1016} dropY={239}
        ticks={[{ y: 199, t: "10000" }, { y: 220, t: "5000" }, { y: 241, t: "0" }]}
        d="M1062.5 199V233L1064 240L1066 236.5L1068 238L1070 240.5H1083L1085 241.5H1136L1138 238.5H1141L1144 240.5H1153L1155 241.5H1198L1200 238.5H1203L1206 240.5H1215L1217 241.5H1261L1263 238.5H1266L1269 240.5H1277L1279 241.5H1310" />
      <MiniChart top={290} h={41} title="v" unit="m/s" unitX={1044} unitY={320} unitW={19} dropX={1034} dropY={323}
        ticks={[{ y: 290, t: "10" }, { y: 306, t: "5" }, { y: 321, t: "0" }]}
        d="M1062.5 290V308L1064 311V321L1066 331H1067L1070 323L1073 319.5H1077L1080 321.5H1136.5V317L1138 313.5H1140L1143 317L1146 321.5H1152L1154 322.5H1156L1157 321.5H1199L1200 327L1201 329.5H1203L1206 324L1210 320.5H1213L1214 321.5H1261.5V315L1263 313.5L1266 316L1269 321.5H1275L1277 322.5H1279L1280 321.5H1310" />
    </svg>
  );
}

function ToolButton({ active, children }: Kids & { active?: boolean }) {
  return (
    <div className={`flex h-[23px] w-[23px] items-center justify-center border ${active ? "border-[#0060ac] bg-[#cce4f7]" : "border-[#adadad] bg-[#e1e1e1]"}`}>{children}</div>
  );
}

function Sep({ cls = "h-[21px] bg-[#8f8f8f]" }: { cls?: string }) {
  return <div className={`w-px shrink-0 ${cls}`} />;
}

function ExplorerWindow() {
  return (
    <div className="absolute left-[684px] top-0 flex h-[381px] w-[659px] flex-col border border-t-0 border-[#6e6e6e] bg-[#f0f0f0] text-[12px] tracking-[-0.42px] text-black shadow-[0_6px_12px_rgba(0,0,0,0.35)]">
      <div className="flex h-[24px] items-start justify-between bg-white pl-[7px] pr-[17px]">
        <div className="flex items-start">
          <div className="mt-[-1px]"><MatlabIcon /></div>
          <span className="ml-[5px] leading-[16px]">Simscape Results Explorer: untitled</span>
        </div>
        <div className="mt-[1px]"><WindowButtons color="#000" /></div>
      </div>
      <div className="flex h-[25px] items-center border-b border-[#a0a0a0] bg-white pb-px pl-[7px] pr-[5px]">
        <span className="w-[35px]">File</span>
        <span className="w-[37px]">Edit</span>
        <span className="w-[41px]">View</span>
        <span className="w-[45px]">Insert</span>
        <span className="w-[45px]">Tools</span>
        <span className="w-[59px]">Desktop</span>
        <span className="w-[61px]">Window</span>
        <span className="mr-auto">Help</span>
        <DockArrow />
      </div>
      <div className="flex h-[27px] items-center border-b border-[#a0a0a0] pb-px pl-[2px]">
        <Icon>
          <path d="M4 7L3 1L10 1L12 7Z" fill="#eee" stroke="#888" />
          <path d="M5 3H10M5 5H10" stroke="#6b9ed0" />
          <path d="M1 8L4 6H13L15 9V13L12 15H4L1 12Z" fill="#bbb" stroke="#555" />
          <path d="M2 11H11L14 9" stroke="#333" fill="none" />
          <path d="M3 13H10" stroke="#fff" />
        </Icon>
        <div className="w-[7px]" /><Sep /><div className="w-[7px]" />
        <Icon>
          <path d="M3.5 0.5H14.5V7.5H3.5Z" fill="#fff" stroke="#263f76" />
          <path d="M3 1H15V3H3Z" fill="#35538f" />
          <path d="M0.5 3.5H12V10H0.5Z" fill="#eaf0f8" stroke="#263f76" />
          <rect x="3" y="9.5" width="6" height="4" rx="2" fill="#dfe6ee" stroke="#778ba5" strokeWidth="1.5" />
          <rect x="8" y="10.5" width="6" height="4" rx="2" fill="#dfe6ee" stroke="#4e6686" strokeWidth="1.5" />
        </Icon>
        <div className="w-[7px]" /><Sep /><div className="w-[10px]" />
        <Icon w={11} h={16}>
          <defs>
            <linearGradient id="cbar" x1="0" y1="0" x2="0" y2="1">
              <stop offset="0" stopColor="#6db1ee" />
              <stop offset="0.5" stopColor="#9ce0c2" />
              <stop offset="0.75" stopColor="#f3e089" />
              <stop offset="1" stopColor="#ef8d68" />
            </linearGradient>
          </defs>
          <rect x="0.7" y="0.7" width="9.6" height="14.6" fill="url(#cbar)" stroke="#2b3f74" strokeWidth="1.3" />
        </Icon>
        <div className="w-[9px]" />
        <Icon>
          <rect x="0.7" y="0.7" width="14.6" height="14.6" fill="#fff" stroke="#2b3f74" strokeWidth="1.3" />
          <rect x="2.5" y="3" width="5" height="4" fill="#e45252" />
          <rect x="2.5" y="9" width="5" height="4" fill="#5856d8" />
          <path d="M9 5H13M9 11H13" stroke="#222" strokeWidth="1.3" />
        </Icon>
        <div className="w-[7px]" /><Sep /><div className="w-[11px]" />
        <Icon w={11} h={15}>
          <path d="M1 0.8V11.5L3.7 9.2L6 14H8L6 8.8H9.5Z" fill="#fff" stroke="#000" />
        </Icon>
        <div className="w-[8px]" />
        <Icon>
          <rect x="0.7" y="0.7" width="14.6" height="14" fill="#fff" stroke="#444" strokeWidth="1.2" />
          <rect x="0.5" y="0.5" width="15" height="3" fill="#4b6893" />
          <rect x="1.5" y="4" width="6" height="10" fill="#e1e1e1" />
          <path d="M8 4V14" stroke="#555" />
          <path d="M10 6.5H14M10 9.5H14M10 12.5H14" stroke="#222" strokeWidth="1.2" />
        </Icon>
      </div>
      <div className="flex flex-1">
        <div className="flex w-[328px] flex-col pt-[1px]">
          <div className="flex h-[38px] items-center gap-[7px] border border-l-0 border-[#a0a0a0] pl-[7px] shadow-[inset_0_1px_0_#fff]">
            <ToolButton>
              <Icon w={17} h={17}>
                <rect x="1.5" y="1.5" width="12" height="12" fill="#fff" stroke="#777" />
                <path d="M5.5 1V13M3 4H5M3 7H5M3 10H5M7 7L9 3L11 8" stroke="#444" fill="none" />
                <Gear x={11.3} y={11.3} s={0.75} />
              </Icon>
            </ToolButton>
            <ToolButton>
              <Icon w={17} h={17}>
                <rect x="1.5" y="6.5" width="10" height="9" fill="#fff" stroke="#666" />
                <path d="M3 12C4.5 8 6 11 7 13L10 9" stroke="#c85c28" strokeWidth="1.3" fill="none" />
                <path d="M7 9C8 4 10 3 13 3" stroke="#000" strokeWidth="1.6" fill="none" />
                <path d="M12 0L17 3L12 6Z" fill="#000" />
              </Icon>
            </ToolButton>
            <ToolButton>
              <Icon w={17} h={17}>
                <path d="M12 4C5 0.5 1.5 6 3 10C4.8 14.5 11 15 14 12" stroke="#31608e" strokeWidth="4" fill="none" />
                <path d="M16 1.5V8H9.5Z" fill="#b9d3e8" stroke="#31608e" />
                <path d="M12.5 4.3C5 0.5 1.5 6 3 10C4.8 14.5 11 15 13.6 12.3" stroke="#b9d3e8" strokeWidth="2.2" fill="none" />
              </Icon>
            </ToolButton>
            <ToolButton active>
              <Icon w={17} h={17}>
                <g fill="none" stroke="#129b57" strokeWidth="1.8">
                  <rect x="-4.5" y="-2.4" width="9" height="4.8" rx="2.4" transform="translate(11 5.5) rotate(-45)" />
                  <rect x="-4.5" y="-2.4" width="9" height="4.8" rx="2.4" transform="translate(6 11.3) rotate(-45)" />
                </g>
              </Icon>
            </ToolButton>
          </div>
          <div className="mt-[1px] flex h-[134px] border border-[#868b93] bg-white">
            <div className="flex flex-1 flex-col overflow-hidden pt-px">
              <div className="flex h-[18px] shrink-0 items-center pl-[2px]">
                <Cube />
                <span className="ml-[5px]">untitled</span>
              </div>
              <TreeRow level={1} box="+" icon="cube" text="Ideal Force Source" />
              <TreeRow level={1} box="+" icon="cube" text="Ideal Translational Motion Sensor" />
              <TreeRow level={1} box="-" icon="cube" text="Mass" />
              <TreeRow level={2} box="+" icon="cube" text="M" />
              <TreeRow level={2} icon="sig" text="f" />
              <TreeRow level={2} icon="sig" last text="v" />
              <TreeRow level={1} box="+" icon="cube" text="Mechanical Translational Reference" />
            </div>
            <ScrollBar thumb="h-[31px]" />
          </div>
          <div className="flex h-[129px] flex-col border border-[#868b93] p-px">
            <div className="flex-1 whitespace-nowrap border border-[#b5b5b5] pl-[4px] pt-[7px] leading-4 tracking-[-0.4px] shadow-[inset_1px_1px_0_#fff]">
              <div>Statistics for selected node:</div>
              <div>Description: <span className="text-[#0000ee] underline">Translational Damper</span></div>
              <div>Dimensions:[1 1]</div>
              <div>Number of time steps: 317</div>
              <div>Number of logged variables: 5</div>
              <div>Number of logged zero crossing signals: 0</div>
              <div>Source: <span className="text-[#0000ee] underline">Translational Damper</span></div>
            </div>
          </div>
        </div>
        <SideCharts />
      </div>
    </div>
  );
}

/* ------------------------------------------------------------------ */
/* Scope viewer                                                        */
/* ------------------------------------------------------------------ */

type Pt = [number, number];

function smooth(p: Pt[]) {
  let d = `M${p[0][0]} ${p[0][1]}`;
  for (let i = 0; i < p.length - 1; i++) {
    const a = p[Math.max(i - 1, 0)];
    const b = p[i];
    const c = p[i + 1];
    const e = p[Math.min(i + 2, p.length - 1)];
    d += `C${b[0] + (c[0] - a[0]) / 6} ${b[1] + (c[1] - a[1]) / 6} ${c[0] - (e[0] - b[0]) / 6} ${c[1] - (e[1] - b[1]) / 6} ${c[0]} ${c[1]}`;
  }
  return d;
}

const rise: Pt[] = [[894, 623.5], [897, 601.7], [900.7, 570], [902.7, 546.7], [906, 525], [909.3, 511.7], [912.7, 503.3], [917.3, 500], [921, 501.3], [926, 506.7], [932, 512], [937.7, 514.3], [944.3, 514.3], [955, 513], [959, 512.5]];
const fall: Pt[] = [[1055, 512.5], [1059.3, 543], [1062.7, 570], [1066, 600], [1069.3, 616.7], [1071.7, 626.7], [1074.3, 632.7], [1078.7, 635.3], [1081.7, 634], [1086.7, 629], [1093.3, 623.7], [1100, 621.3], [1105, 621.3], [1114, 623], [1118, 623.5]];
const start: Pt[] = [[700.5, 623.5], [701, 593], [702, 563], [703.3, 546.7], [705.4, 540.7], [707, 543.3], [709.3, 560], [712.7, 593], [715.3, 623.3], [717.3, 640], [719.7, 657.5], [725, 672], [732, 657.5], [735.3, 648.3], [739.3, 636.7], [742.7, 628.3], [747.7, 623.3], [752.7, 621.3], [759.3, 621.3], [766, 623], [772.7, 624.3], [781, 624]];

function ScopePlot() {
  const gx = [764.5, 829.5, 893.5, 958.5, 1022.5, 1087.5, 1151.5, 1215.5, 1280.5];
  const gy: [number, string][] = [[512.5, "0.5"], [534.5, "0.4"], [556.5, "0.3"], [579.5, "0.2"], [601.5, "0.1"], [623.5, "0"], [645.5, "-0.1"]];
  return (
    <svg width="680" height="195" viewBox="678 483 680 195" className="block bg-[#282828]" fontFamily="'Liberation Sans', Arial, sans-serif" fontSize="10.5">
      <defs>
        <clipPath id="plotArea">
          <rect x="700" y="491" width="645" height="166" />
        </clipPath>
      </defs>
      <g shapeRendering="crispEdges" fill="none">
        <rect x="700" y="491" width="645" height="167" fill="#000" />
        {gx.map((x) => <path key={x} d={`M${x} 491V657`} stroke="#545454" />)}
        {gy.map(([y]) => <path key={y} d={`M700 ${y}H1344`} stroke="#545454" />)}
        <rect x="700.5" y="491.5" width="644" height="166" stroke="#afafaf" />
        {gx.map((x) => <path key={x} d={`M${x} 491V498M${x} 651V657`} stroke="#afafaf" />)}
        {gy.map(([y]) => <path key={y} d={`M700 ${y}H706M1339 ${y}H1344`} stroke="#afafaf" />)}
        <path d="M701 623.5H893.5V512.5H1054.5V623.5H1215.5V512.5H1344" stroke="#ffff11" />
        <g clipPath="url(#plotArea)" stroke="#139fff">
          <path d={smooth(start)} />
          <path d="M781 623.5H894M959 512.5H1055M1118 623.5H1216M1281 512.5H1345" />
          <path d={smooth(rise)} />
          <path d={smooth(fall)} />
          <path d={smooth(rise)} transform="translate(322 0)" />
        </g>
      </g>
      <g fill="#afafaf">
        {gy.map(([y, t]) => <text key={t} x="698" y={y + 4.2} textAnchor="end">{t}</text>)}
        {[700, ...gx, 1345].map((x, i) => <text key={x} x={x - 0.5} y="670" textAnchor="middle">{i}</text>)}
      </g>
      <rect x="1345.5" y="484.5" width="12" height="8" fill="#222" stroke="#fff" />
      <path d="M1345 484.5H1358M1351.5 491V487M1349 489L1351.5 486.5L1354 489" stroke="#fff" fill="none" strokeWidth="1.3" />
    </svg>
  );
}

function ScopeWindow() {
  return (
    <div className="absolute left-[677px] top-[398px] flex h-[306px] w-[683px] flex-col border border-[#7a7a7a] bg-[#f0f0f0] text-[12px] tracking-[-0.4px] text-black">
      <div className="flex h-[29px] items-center justify-between bg-white pl-[8px] pr-[17px]">
        <div className="flex items-center">
          <MatlabIcon />
          <span className="ml-[5px] pt-px tracking-[-0.3px] text-[#8f8f8f]">Viewer: Scope1</span>
        </div>
        <WindowButtons color="#999" />
      </div>
      <div className="flex h-[27px] items-center border-b border-[#a0a0a0] bg-white pl-[7px] pr-[4px] pt-px">
        <span className="w-[36px]">File</span>
        <span className="w-[45px]">Tools</span>
        <span className="w-[41px]">View</span>
        <span className="w-[73px]">Simulation</span>
        <span className="mr-auto">Help</span>
        <DockArrow />
      </div>
      <div className="flex h-[27px] items-center border-b border-[#a0a0a0] pb-px pl-[4px]">
        <Icon><Gear x={8} y={8} s={1.1} /></Icon>
        <div className="w-[7px]" /><Caret w={5} h={3} /><div className="w-[6px]" /><Sep cls="h-[21px] bg-[#999]" /><div className="w-[8px]" />
        <Icon>
          <path d="M1 6L8 1.5V10Z" fill="#b9dcf0" stroke="#3a6f98" />
          <rect x="10.5" y="1" width="3" height="9" fill="#b9dcf0" stroke="#3a6f98" />
          <Gear x={10} y={10.5} s={0.8} />
        </Icon>
        <div className="w-[6px]" />
        <Icon vb="0 0 26 26">
          <circle cx="13" cy="13" r="12" fill="url(#runFill)" stroke="#2f6728" strokeWidth="2" />
          <path d="M9.5 7L20 13L9.5 19Z" fill="#111" />
        </Icon>
        <div className="w-[9px]" />
        <Icon w={14} h={14}>
          <rect x="0.7" y="1" width="2.6" height="12" fill="#b9dcf0" stroke="#3a6f98" />
          <path d="M5.5 1.2V12.8L12.8 7Z" fill="#b9dcf0" stroke="#3a6f98" />
        </Icon>
        <div className="w-[7px]" />
        <Icon>
          <circle cx="8" cy="8" r="7.5" fill="#8f8f8f" stroke="#aaa" />
          <rect x="5" y="5" width="6" height="6" fill="#6c6c6c" />
        </Icon>
        <div className="w-[7px]" /><Sep cls="h-[21px] bg-[#999]" /><div className="w-[7px]" />
        <Icon>
          <path d="M0 5.5H7M7 0V8M7 1H12M5 5H11M7 8H12" stroke="#1e7fc4" strokeWidth="1.6" fill="none" />
          <rect x="-3" y="-1.7" width="6" height="3.4" rx="1.7" transform="translate(13 10) rotate(-45)" fill="none" stroke="#555" strokeWidth="1.2" />
          <rect x="-3" y="-1.7" width="6" height="3.4" rx="1.7" transform="translate(9.5 13) rotate(-45)" fill="none" stroke="#555" strokeWidth="1.2" />
        </Icon>
        <div className="w-[7px]" />
        <Camera />
        <div className="w-[7px]" /><Sep cls="h-[21px] bg-[#999]" /><div className="w-[4px]" />
        <div className="flex h-[22px] w-[24px] items-center justify-center border border-[#99ccf2] bg-[#c2ddf3]">
          <Icon>
            <path d="M10 10L14.5 14.5" stroke="#222" strokeWidth="2.6" />
            <circle cx="6.5" cy="6" r="5" fill="#fff" stroke="#444" strokeWidth="1.2" />
            <path d="M4 6H9M6.5 3.5V8.5" stroke="#222" strokeWidth="1.4" />
          </Icon>
        </div>
        <div className="w-[3px]" /><Caret w={5} h={3} /><div className="w-[6px]" /><Sep cls="h-[21px] bg-[#999]" /><div className="w-[8px]" />
        <Icon>
          <rect x="0.5" y="0.5" width="15" height="15" fill="#fff" stroke="#555" />
          <path d="M8 2V6M8 10V14" stroke="#333" strokeWidth="1.5" />
          <path d="M5 4.5L8 1.5L11 4.5M5 11.5L8 14.5L11 11.5" stroke="#333" fill="none" />
        </Icon>
        <div className="w-[7px]" /><Caret w={5} h={3} /><div className="w-[6px]" /><Sep cls="h-[21px] bg-[#999]" /><div className="w-[8px]" />
        <Icon>
          <path d="M1 13H6V3H14M6 13V9" stroke="#222" strokeWidth="2.6" fill="none" />
          <path d="M2.5 9L6 4.5L9.5 9Z" fill="#777" stroke="#222" />
        </Icon>
        <div className="w-[8px]" />
        <Icon>
          <rect x="0.5" y="0.5" width="15" height="15" fill="#f8f8f8" stroke="#666" />
          <path d="M2 12L11.5 2L14.5 5L5 15Z" fill="#a9c9e6" stroke="#33638f" />
          <path d="M5 9L7 11M8 6L10 8M10.5 3.5L12.5 5.5" stroke="#33638f" />
        </Icon>
        <div className="w-[7px]" /><Caret w={5} h={3} />
      </div>
      <div className="bg-white pt-[1px]">
        <ScopePlot />
      </div>
      <div className="flex flex-1 items-center justify-between border-t border-white pr-[2px] text-[11px] tracking-[-0.1px]">
        <span className="pl-[1px] pt-px">Ready</span>
        <div className="flex gap-[2px]">
          <div className="flex h-[19px] w-[76px] items-center whitespace-nowrap border border-b-white border-l-[#999] border-r-white border-t-[#999] pl-[2px]">Sample based</div>
          <div className="flex h-[19px] w-[52px] items-center whitespace-nowrap border border-b-white border-l-[#999] border-r-white border-t-[#999] pl-[2px]">T=10.000</div>
        </div>
      </div>
    </div>
  );
}

export default function App() {
  return (
    <div className="relative h-[704px] w-[1360px] overflow-hidden bg-[#e6e6e6] font-['Noto_Sans','Open_Sans',sans-serif]">
      <BackWindow />
      <ExplorerWindow />
      <EditorWindow />
      <ScopeWindow />
    </div>
  );
}
